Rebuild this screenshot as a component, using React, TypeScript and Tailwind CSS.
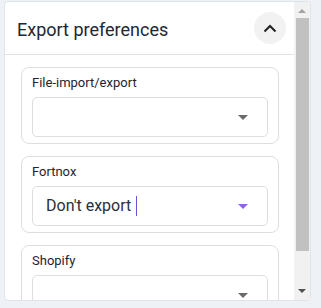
import React from "react";

function Arrow({ color }: { color: string }) {
  return (
    <svg width="10" height="5" viewBox="0 0 10 5" className="shrink-0">
      <path d="M0 0 L10 0 L5 5 Z" fill={color} />
    </svg>
  );
}

function Section({
  label,
  value,
  focused,
}: {
  label: string;
  value?: string;
  focused?: boolean;
}) {
  return (
    <div className="rounded-[8px] border border-[#dedede] bg-white px-[10px] pt-[6px] pb-[6px]">
      <div className="text-[13px] leading-[18px] text-[#1f2330]">{label}</div>
      <div className="mt-[5px] flex h-[40px] items-center rounded-[5px] border border-[#dedede] pl-[13px] pr-[19px]">
        <div className="flex flex-1 items-center text-[16px] text-[#2b2f3a]">
          {value}
          {focused && <span className="ml-[5px] inline-block h-[20px] w-[1px] bg-[#6b4fd8]" />}
        </div>
        <Arrow color={focused ? "#8a63e6" : "#6b6b6b"} />
      </div>
    </div>
  );
}

export default function App() {
  return (
    <div
      className="h-[308px] w-[321px] bg-[#eef1f5] pl-[4px] pt-[1px]"
      style={{ fontFamily: "Roboto, 'Liberation Sans', sans-serif" }}
    >
      <div className="flex h-[300px] w-[307px] overflow-hidden rounded-[4px] border border-[#e0e3e8] bg-white">
        <div className="flex-1 overflow-hidden">
          <div className="flex h-[53px] items-center justify-between border-b border-[#e2e2e2] pl-[12px] pr-[8px]">
            <span className="pt-[2px] text-[18px] text-[#23262f]">Export preferences</span>
            <div className="flex h-[32px] w-[32px] items-center justify-center rounded-full bg-[#f2f2f2]">
              <svg width="14" height="9" viewBox="0 0 14 9">
                <path d="M1.5 7.5 L7 2 L12.5 7.5" fill="none" stroke="#222" strokeWidth="2" />
              </svg>
            </div>
          </div>
          <div className="flex flex-col gap-[12px] pl-[16px] pr-[15px] pt-[12px]">
            <Section label="File-import/export" />
            <Section label="Fortnox" value="Don't export" focused />
            <Section label="Shopify" />
          </div>
        </div>
        <div className="flex w-[16px] flex-col items-center bg-[#f1f1f1]">
          <svg width="8" height="4" viewBox="0 0 8 4" className="mt-[7px]">
            <path d="M0 4 L8 4 L4 0 Z" fill="#a3a3a3" />
          </svg>
          <div className="mt-[5px] h-[233px] w-[13px] bg-[#c1c1c1]" />
          <div className="flex-1" />
          <svg width="8" height="4" viewBox="0 0 8 4" className="mb-[7px]">
            <path d="M0 0 L8 0 L4 4 Z" fill="#505050" />
          </svg>
        </div>
      </div>
    </div>
  );
}
